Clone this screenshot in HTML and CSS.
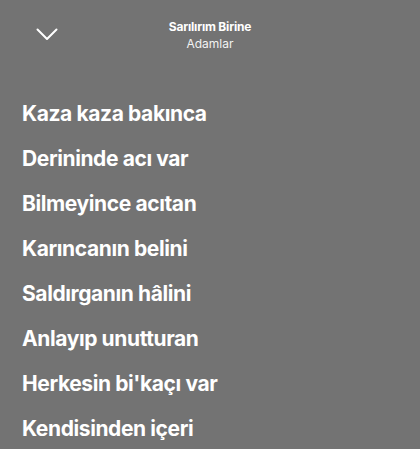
FILE: index.html
```html
<!DOCTYPE html>
<html lang="tr">
<head>
<meta charset="utf-8">
<link rel="stylesheet" href="styles.css">
</head>
<body>
<div class="screen">
  <header class="topbar">
    <button class="close" aria-label="Kapat">
      <svg width="22" height="13" viewBox="0 0 22 13"><path d="M1.5 1.5 L11 11 L20.5 1.5" fill="none" stroke="#fff" stroke-width="2" stroke-linecap="round" stroke-linejoin="round"/></svg>
    </button>
    <div class="track">
      <div class="title">Sarılırım Birine</div>
      <div class="artist">Adamlar</div>
    </div>
  </header>
  <ul class="lyrics">
    <li>Kaza kaza bakınca</li>
    <li>Derininde acı var</li>
    <li>Bilmeyince acıtan</li>
    <li>Karıncanın belini</li>
    <li>Saldırganın hâlini</li>
    <li>Anlayıp unutturan</li>
    <li>Herkesin bi'kaçı var</li>
    <li>Kendisinden içeri</li>
  </ul>
</div>
</body>
</html>
```
FILE: styles.css
```css
html, body {
  margin: 0;
  padding: 0;
  background: #737373;
}
.screen {
  width: 420px;
  height: 449px;
  overflow: hidden;
  font-family: Inter, "Noto Sans", sans-serif;
  color: #fff;
}
.topbar {
  position: relative;
  height: 70px;
  display: flex;
  justify-content: center;
}
.close {
  position: absolute;
  left: 36px;
  top: 28px;
  padding: 0;
  border: 0;
  background: none;
  line-height: 0;
}
.track {
  padding-top: 19px;
  text-align: center;
}
.title {
  font-size: 12px;
  font-weight: 700;
  line-height: 16px;
  letter-spacing: -0.2px;
}
.artist {
  font-size: 12px;
  font-weight: 400;
  line-height: 18px;
  color: #f2f2f2;
}
.lyrics {
  list-style: none;
  margin: 0;
  padding: 21px 0 0 22px;
}
.lyrics li {
  font-size: 21px;
  font-weight: 700;
  line-height: 45px;
  letter-spacing: -0.4px;
}
```
